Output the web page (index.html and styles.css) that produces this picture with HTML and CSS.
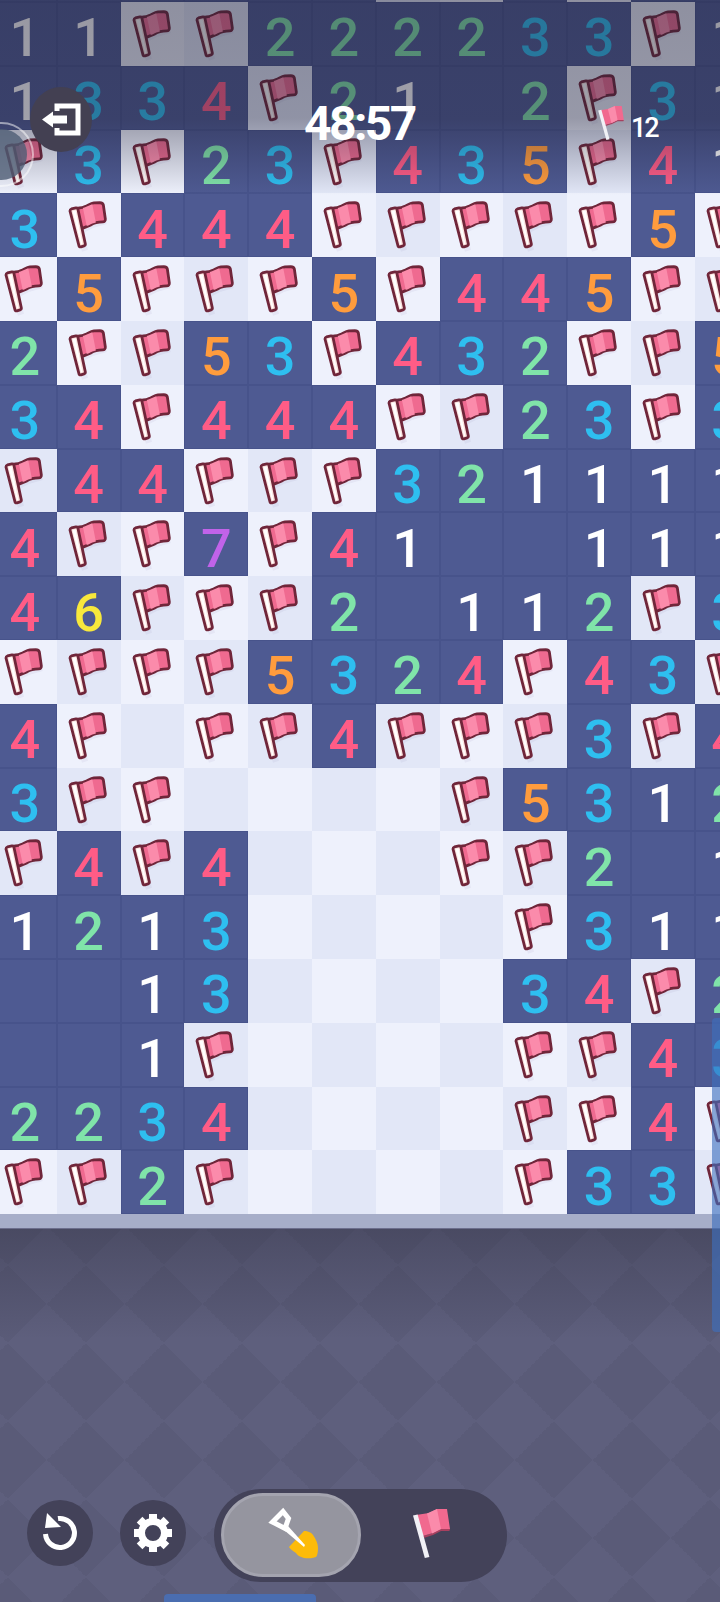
FILE: index.html
```html
<!DOCTYPE html>
<html lang="en">
<head>
  <meta charset="UTF-8">
  <meta name="viewport" content="width=device-width, initial-scale=1.0">
  <title>Minesweeper</title>
  <link rel="stylesheet" href="styles.css">
</head>
<body>
  <svg class="defs" width="0" height="0" aria-hidden="true">
    <symbol id="flag" viewBox="0 0 64 64">
      <path class="flag-shadow" d="M16 20 L27 17 L37 13 L44 13 L50 31 L36 35 L27 40 L31 57 L25 59 Z"/>
      <path class="flag-cloth" d="M14 17 C19 15 24 15 27 14 C31 13 33 10.5 37 10 L43 9.8 C45 9.8 46 10.5 46.5 12 L48.5 26 C48.7 28 47.5 29 46 29 C41 29 37 30 34 32 L23 36.5 Z"/>
      <path class="flag-band" d="M26 15 C29 14 32 12.4 35.4 11.2 L39 29.6 C36.5 30.2 34.5 31 32 32.4 L29.8 33.2 Z"/>
      <path class="flag-pole" d="M13 18 C13 17 13.5 16.4 14.5 16 L19 15 C20 14.8 20.7 15.3 21 16.3 L28.4 51 C28.6 52.1 28.2 52.7 27.2 53 L24 54 C23 54.3 22.2 53.8 22 52.8 Z"/>
      <path class="flag-pole-lit" d="M15.6 18.2 L18.6 17.4 L25.4 51 L24.2 51.4 Z"/>
    </symbol>
    <symbol id="plain-flag" viewBox="0 0 37 49">
      <path class="plain-shade" d="M10 27 L20 24 L28 20 L37 20 L36.4 22 L28 22 L20 26 L10.6 29 Z"/>
      <path class="plain-cloth" d="M3 6 L16 4 L24 0 L34 0 L37 20 L28 20 L20 24 L8 27.5 Z"/>
      <path class="plain-band" d="M14 4.4 L24 0 L28 20 L19 24.4 Z"/>
      <path class="plain-pole" d="M0 6.4 L4.6 5.4 L16.4 48 L11.8 49 Z"/>
    </symbol>
  </svg>

  <div class="screen">
    <div class="board" id="board"></div>
    <div class="board-edge"></div>

    <div class="field">
      <div class="toolbar">
        <button class="round-btn" type="button" aria-label="Restart">
          <svg width="40" height="40" viewBox="0 0 40 40">
            <path class="icon-line" d="M18 5.6 A14.5 14.5 0 1 1 5.5 21"/>
            <path class="icon-fill" d="M7 0 L5 15 L21 14 Z"/>
          </svg>
        </button>
        <button class="round-btn" type="button" aria-label="Settings">
          <svg width="40" height="40" viewBox="0 0 40 40">
            <circle class="gear-ring" cx="20" cy="20" r="11.5"/>
            <g class="icon-fill">
              <rect x="16" y="1" width="8" height="7"/>
              <rect x="16" y="1" width="8" height="7" transform="rotate(45 20 20)"/>
              <rect x="16" y="1" width="8" height="7" transform="rotate(90 20 20)"/>
              <rect x="16" y="1" width="8" height="7" transform="rotate(135 20 20)"/>
              <rect x="16" y="1" width="8" height="7" transform="rotate(180 20 20)"/>
              <rect x="16" y="1" width="8" height="7" transform="rotate(225 20 20)"/>
              <rect x="16" y="1" width="8" height="7" transform="rotate(270 20 20)"/>
              <rect x="16" y="1" width="8" height="7" transform="rotate(315 20 20)"/>
            </g>
          </svg>
        </button>
        <div class="mode-switch">
          <div class="mode mode-on">
            <svg class="shovel" width="54" height="54" viewBox="0 0 54 54">
              <path class="shovel-blade" d="M23 41 L38 25 C42 25 46 27 47 29 C50 33 52 38 52 42 C52 47 51 50 50 51 C46 52.5 42 52.5 38 52 C34 51 31 49 30 47 C27 45 24 43 23 41 Z"/>
              <path class="shovel-grip" d="M17 5.5 L6.5 16 L19 22.5 L22.5 12.5 Z"/>
              <path class="icon-fill" d="M18 24 L22 20 L39 39 L38 41 Z"/>
            </svg>
          </div>
          <div class="mode">
            <svg class="mode-flag" width="37" height="49"><use href="#plain-flag"/></svg>
          </div>
        </div>
      </div>
    </div>

    <div class="hud">
      <button class="exit-btn" type="button" aria-label="Exit">
        <svg width="42" height="36" viewBox="0 0 42 36">
          <path class="exit-door" d="M17 9 V4 H38 V31 H17 V26"/>
          <path class="icon-fill" d="M2 17.5 L13 9.5 V13.5 H27 V21.5 H13 V25.5 Z"/>
        </svg>
      </button>
      <div class="timer">48:57</div>
      <div class="flag-count">
        <svg width="26" height="34"><use href="#plain-flag"/></svg>
        <span>12</span>
      </div>
    </div>

    <div class="touch-ring"></div>
    <div class="scroll-thumb"></div>
    <div class="home-bar"></div>
  </div>

  <script>
    // F = flag, . = opened empty, _ = closed empty, digits = mine count
    const rows = [
      '......__._..',
      '11FF222233F1',
      '1334F21.2F31',
      'F3F23F435F41',
      '3F444FFFFF5F',
      'F5FFF5F445FF',
      '2FF53F432FF5',
      '34F444FF23F3',
      'F44FFF321111',
      '4FF7F41..111',
      '46FFF2.112F3',
      'FFFF5324F43F',
      '4F_FF4FFF3F4',
      '3FF____F5312',
      'F4F4___FF2.1',
      '1213____F311',
      '..13____34F2',
      '..1F____FF43',
      '2234____FF4F',
      'FF2F____F33F'
    ];

    const board = document.getElementById('board');
    rows.forEach((row, r) => {
      row.split('').forEach((ch, c) => {
        const cell = document.createElement('div');
        if (ch === 'F' || ch === '_') {
          // the first row of the array is the sliver above the screen
          cell.className = 'cell ' + ((r + c) % 2 === 1 ? 'paler' : 'pale');
          if (ch === 'F') {
            cell.innerHTML = '<svg class="cell-flag" viewBox="0 0 64 64"><use href="#flag"/></svg>';
          }
        } else {
          cell.className = 'cell open';
          if (ch !== '.') {
            cell.classList.add('n' + ch);
            cell.textContent = ch;
          }
        }
        board.appendChild(cell);
      });
    });
  </script>
</body>
</html>
```

FILE: styles.css
```css
* {
  box-sizing: border-box;
}
body {
  margin: 0;
  background-color: #5c5d7b;
  font-family: Roboto, "Liberation Sans", sans-serif;
}
button {
  border: none;
  padding: 0;
  cursor: pointer;
}
.defs {
  position: absolute;
}
.screen {
  position: relative;
  width: 720px;
  height: 1602px;
  overflow: hidden;
  display: flex;
  flex-direction: column;
}

/* board */
.board {
  display: grid;
  grid-template-columns: repeat(12, 63.8px);
  grid-auto-rows: 63.8px;
  width: 765.6px;
  flex: none;
  margin: -61.8px 0 0 -7px;
}
.cell {
  display: flex;
  align-items: center;
  justify-content: center;
  font-size: 54px;
  font-weight: 500;
  line-height: 1;
}
.open {
  background-color: #4e5a92;
  border: 1px solid #47538b;
  padding-top: 9px;
}
.pale {
  background-color: #e2e7f7;
}
.paler {
  background-color: #eef1fc;
}
.cell-flag {
  width: 63.8px;
  height: 63.8px;
  flex: none;
}
.n1 { color: #ffffff; }
.n2 { color: #80e4a9; }
.n3 { color: #2ebff0; }
.n4 { color: #ff5c86; }
.n5 { color: #ff9c3d; }
.n6 { color: #f8e83c; }
.n7 { color: #c163e9; }

.flag-shadow { fill: #5a4a80; opacity: 0.06; }
.flag-cloth { fill: #ef6a90; stroke: #70263a; stroke-width: 2.8; stroke-linejoin: round; }
.flag-band { fill: #fb8bab; }
.flag-pole { fill: #fbe3df; stroke: #70263a; stroke-width: 2.8; stroke-linejoin: round; }
.flag-pole-lit { fill: #ffffff; }

.plain-cloth { fill: #f1698f; }
.plain-band { fill: #fb8bab; }
.plain-shade { fill: #a8405f; }
.plain-pole { fill: #f1f1f6; }

.board-edge {
  height: 15px;
  flex: none;
  background-color: #a7aec9;
  border-bottom: 1px solid #6c6e8c;
}

/* bottom area */
.field {
  flex: 1;
  display: flex;
  flex-direction: column;
  justify-content: flex-end;
  padding: 0 0 20px 27px;
  background-color: #5e5f7d;
  background-image:
    linear-gradient(rgba(44, 44, 60, 0.36), rgba(44, 44, 60, 0) 110px),
    linear-gradient(45deg, #5a5b78 25%, transparent 0),
    linear-gradient(-45deg, #5a5b78 25%, transparent 0),
    linear-gradient(135deg, #5a5b78 25%, transparent 0),
    linear-gradient(-135deg, #5a5b78 25%, transparent 0);
  background-size: 100% 100%, 78px 78px, 78px 78px, 78px 78px, 78px 78px;
  background-position: 0 0, 8px -3px, 8px -3px, 8px -3px, 8px -3px;
}
.toolbar {
  display: flex;
  align-items: center;
  gap: 27px;
}
.round-btn {
  width: 66px;
  height: 66px;
  border-radius: 50%;
  background-color: #434259;
  display: flex;
  align-items: center;
  justify-content: center;
  margin-bottom: 6px;
}
.mode-switch {
  display: flex;
  align-items: stretch;
  width: 293px;
  height: 93px;
  margin-left: 1px;
  padding: 4px 0 5px 7px;
  border-radius: 47px;
  background-color: #434259;
}
.mode {
  flex: 1;
  display: flex;
  align-items: center;
  justify-content: center;
}
.mode-on {
  flex: none;
  width: 140px;
  border: 3px solid #a4a4af;
  border-radius: 42px;
  background-color: #95959f;
}
.shovel {
  margin: 0 0 4px 3px;
}
.mode-flag {
  margin: 0 5px 3px 0;
}
.shovel-blade { fill: #fdbb0a; }
.shovel-grip { fill: none; stroke: #ffffff; stroke-width: 5; stroke-linejoin: miter; }
.icon-fill { fill: #ffffff; }
.icon-line { fill: none; stroke: #ffffff; stroke-width: 5; }
.gear-ring { fill: none; stroke: #ffffff; stroke-width: 7; }
.exit-door { fill: none; stroke: #ffffff; stroke-width: 5; }

/* overlays */
.hud {
  position: absolute;
  top: 0;
  left: 0;
  width: 720px;
  height: 195px;
  display: flex;
  align-items: flex-start;
  padding: 87px 0 0 30px;
  background: linear-gradient(rgba(30, 30, 52, 0.46) 0, rgba(30, 30, 52, 0.42) 118px, rgba(30, 30, 52, 0) 195px);
}
.exit-btn {
  width: 62px;
  height: 65px;
  border-radius: 50%;
  background-color: #434052;
  display: flex;
  align-items: center;
  justify-content: center;
}
.timer {
  margin: 13px 0 0 212px;
  width: 112px;
  color: #ffffff;
  font-size: 48px;
  font-weight: 700;
  letter-spacing: -2.6px;
  line-height: 48px;
  white-space: nowrap;
}
.flag-count {
  display: flex;
  align-items: flex-start;
  gap: 7px;
  margin: 19px 0 0 182px;
  color: #ffffff;
  font-size: 27px;
  font-weight: 500;
  letter-spacing: -2px;
  line-height: 27px;
}
.flag-count span {
  margin-top: 9px;
}
.touch-ring {
  position: absolute;
  left: -31px;
  top: 122px;
  width: 65px;
  height: 65px;
  border-radius: 50%;
  border: 2px solid rgba(255, 255, 255, 0.5);
  padding: 5px;
  background-clip: content-box;
  background-color: rgba(78, 92, 116, 0.8);
}
.scroll-thumb {
  position: absolute;
  right: 0;
  top: 1018px;
  width: 8px;
  height: 314px;
  border-radius: 4px 0 0 4px;
  background-color: rgba(62, 112, 190, 0.62);
}
.home-bar {
  position: absolute;
  left: 164px;
  bottom: 0;
  width: 152px;
  height: 8px;
  border-radius: 4px 4px 0 0;
  background-color: #4a6db0;
}
```
